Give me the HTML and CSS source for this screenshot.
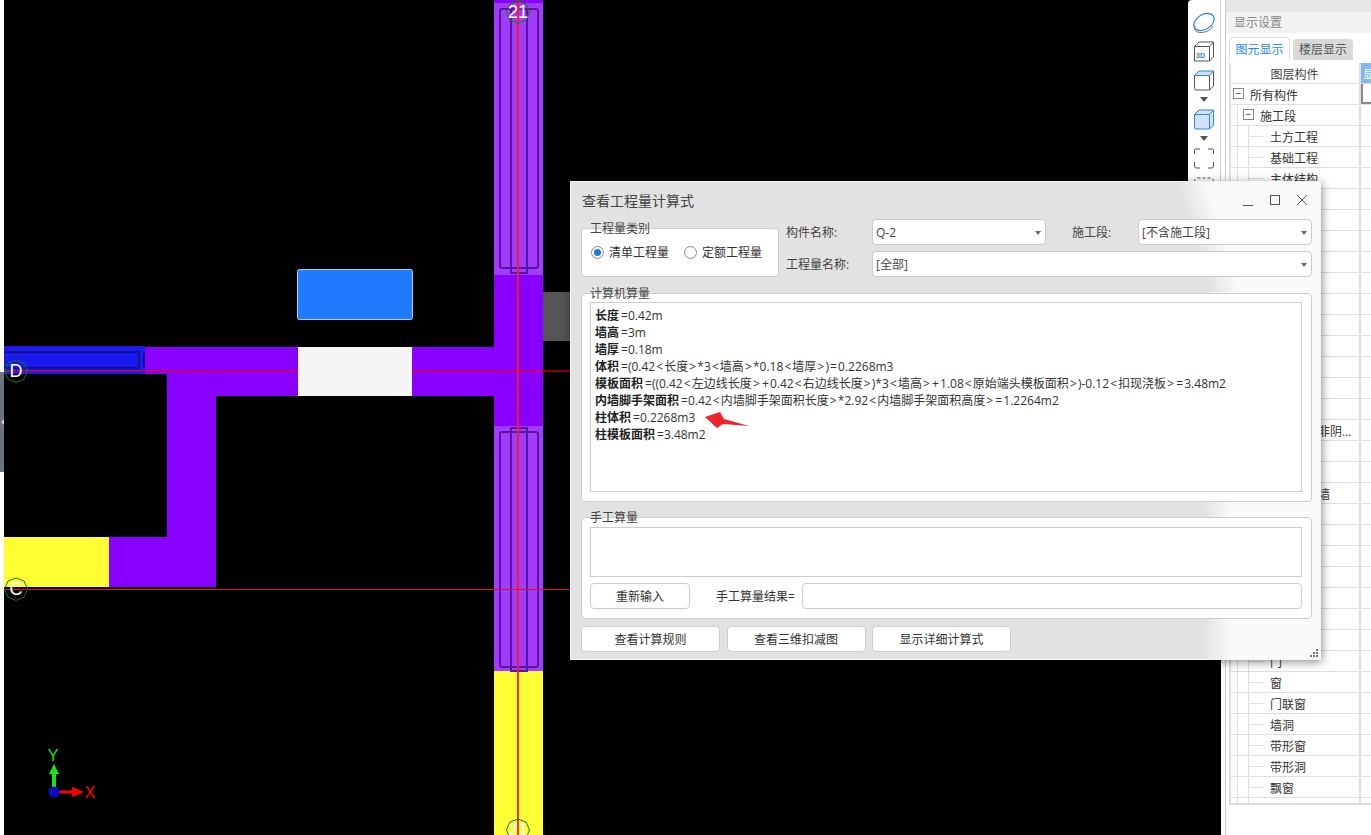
FILE: index.html
```html
<!DOCTYPE html>
<html lang="zh-CN">
<head>
<meta charset="utf-8">
<title>查看工程量计算式</title>
<link rel="stylesheet" href="styles.css">
</head>
<body>
<div class="app">
  <div class="strip"><div class="strip-handle"><span class="strip-arrow"></span></div></div>
  <main class="canvas">
    <svg class="cad" viewBox="4 0 1217 835" width="1217" height="835">
      <rect x="543" y="292" width="27" height="49" fill="#555"/>
      <!-- vertical wall -->
      <rect x="494" y="0" width="49" height="671" fill="#8800ff"/>
      <rect x="494" y="3" width="49" height="272" fill="#a33bff"/>
      <rect x="494" y="426" width="49" height="245" fill="#a33bff"/>
      <rect x="494" y="671" width="49" height="164" fill="#ffff33"/>
      <!-- horizontal walls -->
      <rect x="145" y="347" width="349" height="27" fill="#8800ff"/>
      <rect x="167" y="374" width="327" height="22" fill="#8800ff"/>
      <rect x="167" y="396" width="49" height="191" fill="#8800ff"/>
      <rect x="109" y="537" width="58" height="50" fill="#8800ff"/>
      <rect x="4" y="537" width="105" height="50" fill="#ffff33"/>
      <rect x="297.500" y="269.500" width="115" height="50" rx="2" fill="#1f7aff" stroke="#a9cdfb"/>
      <!-- blue beam -->
      <rect x="4" y="346" width="141" height="28" fill="#1a1aee"/>
      <path d="M4 352H139V368H4M139 352V368M144 352V368" fill="none" stroke="#12128c" stroke-width="2"/>
      <!-- rebar outlines -->
      <g fill="none" stroke="#55199a" stroke-width="2">
        <rect x="500" y="9" width="38" height="259" rx="2"/>
        <path d="M511 9V273H527V9"/>
        <rect x="500" y="432" width="38" height="235" rx="2"/>
        <path d="M511 428H527V671H511Z"/>
      </g>
      <!-- axis lines -->
      <path d="M4 371H570" stroke="#ff0000" stroke-opacity=".55" stroke-width="2"/>
      <rect x="298" y="347" width="114" height="49" fill="#f5f5f5"/>
      <path d="M518 0V835" stroke="#ff1a1a" stroke-opacity=".9" stroke-width="2"/>
      <path d="M4 589.500H570" stroke="#d81818"/>
      <!-- axis bubbles -->
      <g fill="none" stroke="#0b7d0b">
        <polygon points="16,360 24,363 27.500,371 24,379 16,382.500 8,379 4.500,371 8,363"/>
        <polygon points="16,578 24,581 27.500,589 24,597 16,600.500 8,597 4.500,589 8,581"/>
        <polygon points="518,1 526,4 529.500,12 526,20 518,23.500 510,20 506.500,12 510,4"/>
        <polygon points="518,819 526,822 529.500,830 526,838 518,841.500 510,838 506.500,830 510,822"/>
      </g>
      <g class="bubble-text">
        <text x="16" y="377">D</text>
        <text x="16" y="595">C</text>
        <text x="518" y="18">21</text>
        <text x="518" y="836">21</text>
      </g>
      <!-- gizmo -->
      <path d="M54 792V772" stroke="#14e614" stroke-width="4"/>
      <polygon points="54,764 59,774 49,774" fill="#14e614"/>
      <path d="M58 792H74" stroke="#f00" stroke-width="3"/>
      <polygon points="84,792 72,787 72,797" fill="#f00"/>
      <circle cx="54" cy="792" r="5.500" fill="#0a0ac8"/>
      <text class="gizmo-y" x="53" y="761">Y</text>
      <text class="gizmo-x" x="90" y="798">X</text>
    </svg>

    <div class="toolbar">
      <svg class="tool tool-first" width="24" height="24" viewBox="0 0 24 24" fill="none">
        <path d="M3 15C1.500 18 3 22 10 21.500C15 21 19 19 21 15" stroke="#777"/>
        <ellipse cx="12" cy="11" rx="11" ry="7.500" transform="rotate(-32 12 11)" stroke="#2f86e6" stroke-width="1.200"/>
      </svg>
      <svg class="tool" width="24" height="24" viewBox="0 0 24 24" fill="none" stroke="#555">
        <path d="M2.500 7.500L7 3H21.500V18L17.500 22H2.500ZM2.500 7.500H17.500V22M17.500 7.500L21.500 3"/>
        <text class="tool-3d" x="4" y="18.500">3D</text>
      </svg>
      <svg class="tool" width="24" height="24" viewBox="0 0 24 24" fill="none" stroke="#555">
        <path d="M2.500 7.500L7 3H21.500L17.500 7.500H2.500Z" fill="#cfe3fb" stroke="#2f86e6"/>
        <path d="M2.500 7.500V20.500Q2.500 22 4 22H17.500V7.500M17.500 22L21.500 18V3"/>
      </svg>
      <span class="tool-arrow"></span>
      <svg class="tool" width="24" height="24" viewBox="0 0 24 24" fill="#cfe3fb" stroke="#2f86e6">
        <path d="M2.500 7.500L7 3H21.500V18L17.500 22H4Q2.500 22 2.500 20.500ZM2.500 7.500H17.500V22M17.500 7.500L21.500 3"/>
      </svg>
      <span class="tool-arrow"></span>
      <svg class="tool" width="24" height="24" viewBox="0 0 24 24" fill="none" stroke="#555">
        <path d="M2.500 8V4Q2.500 3 4 3H8M16 3H20Q21.500 3 21.500 4V8M21.500 16V20Q21.500 22 20 22H16M8 22H4Q2.500 22 2.500 20V16"/>
      </svg>
      <svg class="tool" width="24" height="24" viewBox="0 0 24 24" fill="none" stroke="#555">
        <rect x="2.500" y="3" width="19" height="19" rx="3" stroke-dasharray="3 2"/>
      </svg>
    </div>
  </main>

  <aside class="panel">
    <div class="panel-top"></div>
    <div class="panel-head">显示设置</div>
    <div class="tabs">
      <span class="tab tab-active">图元显示</span>
      <span class="tab">楼层显示</span>
    </div>
    <div class="tree">
      <div class="row row-head"><span class="cell-main cell-center">图层构件</span><span class="cell-side side-head">显</span></div>
      <div class="row"><span class="cell-main"><i class="box box-a">−</i><span class="lv0">所有构件</span></span><span class="cell-side side-sel"></span></div>
      <div class="row"><span class="cell-main line1"><i class="box box-b">−</i><span class="lv1">施工段</span></span><span class="cell-side"></span></div>
      <div class="row"><span class="cell-main lines"><span class="lv2">土方工程</span></span><span class="cell-side"></span></div>
      <div class="row"><span class="cell-main lines"><span class="lv2">基础工程</span></span><span class="cell-side"></span></div>
      <div class="row"><span class="cell-main lines"><span class="lv2">主体结构</span></span><span class="cell-side"></span></div>
      <div class="row"><span class="cell-main lines"><span class="lv2">柱</span></span><span class="cell-side"></span></div>
      <div class="row"><span class="cell-main lines"><span class="lv2">构造柱</span></span><span class="cell-side"></span></div>
      <div class="row"><span class="cell-main lines"><span class="lv2">墙</span></span><span class="cell-side"></span></div>
      <div class="row"><span class="cell-main lines"><span class="lv2">剪力墙</span></span><span class="cell-side"></span></div>
      <div class="row"><span class="cell-main lines"><span class="lv2">砌体墙</span></span><span class="cell-side"></span></div>
      <div class="row"><span class="cell-main lines"><span class="lv2">暗柱</span></span><span class="cell-side"></span></div>
      <div class="row"><span class="cell-main lines"><span class="lv2">端柱</span></span><span class="cell-side"></span></div>
      <div class="row"><span class="cell-main lines"><span class="lv2">暗梁</span></span><span class="cell-side"></span></div>
      <div class="row"><span class="cell-main lines"><span class="lv2">连梁</span></span><span class="cell-side"></span></div>
      <div class="row"><span class="cell-main lines"><span class="lv2">框架梁</span></span><span class="cell-side"></span></div>
      <div class="row"><span class="cell-main lines"><span class="lv2">圈梁</span></span><span class="cell-side"></span></div>
      <div class="row"><span class="cell-main lines"><span class="lv2 clip">约束边缘非阴影区</span></span><span class="cell-side"></span></div>
      <div class="row"><span class="cell-main lines"><span class="lv2">现浇板</span></span><span class="cell-side"></span></div>
      <div class="row"><span class="cell-main lines"><span class="lv2">楼梯</span></span><span class="cell-side"></span></div>
      <div class="row"><span class="cell-main lines"><span class="lv2">地下连续墙</span></span><span class="cell-side"></span></div>
      <div class="row"><span class="cell-main lines"><span class="lv2">过梁</span></span><span class="cell-side"></span></div>
      <div class="row"><span class="cell-main lines"><span class="lv2">飘窗板</span></span><span class="cell-side"></span></div>
      <div class="row"><span class="cell-main lines"><span class="lv2">挑檐</span></span><span class="cell-side"></span></div>
      <div class="row"><span class="cell-main lines"><span class="lv2">栏板</span></span><span class="cell-side"></span></div>
      <div class="row"><span class="cell-main lines"><span class="lv2">阳台</span></span><span class="cell-side"></span></div>
      <div class="row"><span class="cell-main lines"><span class="lv2">雨篷</span></span><span class="cell-side"></span></div>
      <div class="row"><span class="cell-main lines"><span class="lv2">压顶</span></span><span class="cell-side"></span></div>
      <div class="row"><span class="cell-main lines"><span class="lv2">门</span></span><span class="cell-side"></span></div>
      <div class="row"><span class="cell-main lines"><span class="lv2">窗</span></span><span class="cell-side"></span></div>
      <div class="row"><span class="cell-main lines"><span class="lv2">门联窗</span></span><span class="cell-side"></span></div>
      <div class="row"><span class="cell-main lines"><span class="lv2">墙洞</span></span><span class="cell-side"></span></div>
      <div class="row"><span class="cell-main lines"><span class="lv2">带形窗</span></span><span class="cell-side"></span></div>
      <div class="row"><span class="cell-main lines"><span class="lv2">带形洞</span></span><span class="cell-side"></span></div>
      <div class="row"><span class="cell-main lines"><span class="lv2">飘窗</span></span><span class="cell-side"></span></div>
      <div class="row row-end"><span class="cell-main lines"></span><span class="cell-side"></span></div>
    </div>
  </aside>
</div>

<section class="dialog">
  <header class="titlebar">
    <span>查看工程量计算式</span>
    <div class="winbtns">
      <svg width="12" height="12" viewBox="0 0 12 12"><path d="M1 11.500H11" stroke="#555"/></svg>
      <svg width="12" height="12" viewBox="0 0 12 12"><rect x="1.500" y="1.500" width="9" height="9" fill="none" stroke="#555"/></svg>
      <svg width="12" height="12" viewBox="0 0 12 12"><path d="M1 1L11 11M11 1L1 11" stroke="#555"/></svg>
    </div>
  </header>
  <div class="dialog-body">
    <div class="top-row">
      <div class="group group-type">
        <span class="legend">工程量类别</span>
        <label class="radio"><i class="dot dot-on"></i>清单工程量</label>
        <label class="radio"><i class="dot"></i>定额工程量</label>
      </div>
      <div class="fields">
        <span class="flabel">构件名称:</span>
        <div class="combo">Q-2</div>
        <span class="flabel flabel-in">施工段:</span>
        <div class="combo">[不含施工段]</div>
        <span class="flabel">工程量名称:</span>
        <div class="combo combo-wide">[全部]</div>
      </div>
    </div>

    <div class="group group-calc">
      <span class="legend">计算机算量</span>
      <div class="textbox formula">
        <p><b>长度</b>=0.42m</p>
        <p><b>墙高</b>=3m</p>
        <p><b>墙厚</b>=0.18m</p>
        <p><b>体积</b>=(0.42<u>&lt;</u>长度<u>&gt;</u>*3<u>&lt;</u>墙高<u>&gt;</u>*0.18<u>&lt;</u>墙厚<u>&gt;</u>)<u>=</u>0.2268m3</p>
        <p><b>模板面积</b>=((0.42<u>&lt;</u>左边线长度<u>&gt;</u><u>+</u>0.42<u>&lt;</u>右边线长度<u>&gt;</u>)*3<u>&lt;</u>墙高<u>&gt;</u><u>+</u>1.08<u>&lt;</u>原始端头模板面积<u>&gt;</u>)-0.12<u>&lt;</u>扣现浇板<u>&gt;</u><u>=</u>3.48m2</p>
        <p><b>内墙脚手架面积</b>=0.42<u>&lt;</u>内墙脚手架面积长度<u>&gt;</u>*2.92<u>&lt;</u>内墙脚手架面积高度<u>&gt;</u><u>=</u>1.2264m2</p>
        <p><b>柱体积</b>=0.2268m3</p>
        <p><b>柱模板面积</b>=3.48m2</p>
      </div>
    </div>

    <div class="group group-manual">
      <span class="legend">手工算量</span>
      <div class="textbox manual-box"></div>
      <div class="manual-row">
        <span class="btn btn-input">重新输入</span>
        <span class="manual-label">手工算量结果=</span>
        <div class="result"></div>
      </div>
    </div>

    <div class="actions">
      <span class="btn btn-act">查看计算规则</span>
      <span class="btn btn-act">查看三维扣减图</span>
      <span class="btn btn-act">显示详细计算式</span>
    </div>
  </div>
  <svg class="grip" width="9" height="9" viewBox="0 0 9 9" fill="#777">
    <rect x="6" y="0" width="2" height="2"/><rect x="3" y="3" width="2" height="2"/><rect x="6" y="3" width="2" height="2"/>
    <rect x="0" y="6" width="2" height="2"/><rect x="3" y="6" width="2" height="2"/><rect x="6" y="6" width="2" height="2"/>
  </svg>
</section>

<svg class="callout" width="46" height="18" viewBox="0 0 46 18">
  <polygon points="1,5 16,0 20,7 45,14 19,12 13,16" fill="#f0242c"/>
</svg>
</body>
</html>
```

FILE: styles.css
```css
* { box-sizing: border-box; }
html, body { margin: 0; height: 100%; }
body {
  width: 1371px;
  height: 835px;
  overflow: hidden;
  background: #fff;
  color: #333;
  font: 12px/16px "Open Sans", "Noto Sans CJK SC", sans-serif;
  position: relative;
}
.app { display: flex; width: 1371px; height: 835px; }

/* left strip */
.strip { width: 4px; flex: none; padding-top: 372px; }
.strip-handle {
  height: 100px;
  background: #6c757d;
  display: flex;
  align-items: center;
}
.strip-arrow {
  width: 0; height: 0;
  border: 3px solid transparent;
  border-left-width: 0;
  border-right-color: #ccc;
  margin-left: 1px;
}

/* canvas */
.canvas { position: relative; width: 1217px; flex: none; background: #000; overflow: hidden; }
.cad { display: block; }
.bubble-text text { fill: #fff; font: 18px "Liberation Sans", sans-serif; text-anchor: middle; }
.gizmo-y { fill: #14e614; font: 16px "Liberation Sans", sans-serif; text-anchor: middle; }
.gizmo-x { fill: #f00; font: 16px "Liberation Sans", sans-serif; text-anchor: middle; }
.toolbar {
  position: absolute;
  left: 1184px;
  top: 0;
  width: 33px;
  height: 600px;
  background: #fff;
  border-right: 1px solid #ccc;
  border-top-left-radius: 4px;
  padding-top: 11px;
  display: flex;
  flex-direction: column;
  align-items: center;
}
.tool { flex: none; margin-bottom: 5px; margin-right: 1px; }
.tool-first { margin-bottom: 4px; }
.tool-3d { font: bold 7px "Liberation Sans", sans-serif; fill: #2f7fd6; stroke: none; }
.tool-arrow {
  width: 0; height: 0;
  flex: none;
  margin: 0 0 5px;
  border: 4px solid transparent;
  border-top: 5px solid #555;
  border-bottom: 0;
}

/* right panel */
.panel { flex: 1; position: relative; background: #fff; padding-left: 4px; }
.panel::before {
  content: "";
  position: absolute;
  left: 4px; top: 0; bottom: 0;
  width: 1px;
  background: #ccc;
}
.panel-top { height: 12px; background: #e6e6e6; margin-left: 1px; }
.panel-head {
  height: 21px;
  background: #f2f2f2;
  margin-left: 1px;
  padding: 3px 0 0 8px;
  color: #888;
  line-height: 16px;
}
.tabs { display: flex; gap: 3px; padding: 4px 0 3px 4px; align-items: flex-end; height: 30px; }
.tab {
  width: 60px;
  height: 21px;
  background: #d9d9d9;
  color: #555;
  text-align: center;
  line-height: 22px;
  border-radius: 4px 4px 0 0;
}
.tab-active {
  width: 61px;
  height: 23px;
  line-height: 23px;
  background: #fff;
  color: #1e88f0;
  border: 1px solid #ddd;
  border-bottom: 0;
}
.tree {
  margin-left: 4px;
  border-left: 2px solid #ddd;
  border-bottom: 2px solid #ddd;
  width: 142px;
  overflow: hidden;
}
.row { display: flex; height: 21px; border-bottom: 1px solid #ddd; }
.row-end { height: 5px; border-bottom: 0; }
.row-head .cell-main { color: #444; }
.cell-main {
  position: relative;
  width: 130px;
  flex: none;
  border-right: 2px solid #ddd;
  line-height: 23px;
  white-space: nowrap;
  color: #333;
}
.cell-center { text-align: center; padding-right: 1px; }
.cell-side { flex: 1; }
.side-head { background: #7fb8f5; color: #fff; padding-left: 2px; line-height: 23px; }
.side-sel { border: 2px solid #888; border-right: 0; border-top: 0; }
.lv0 { position: absolute; left: 19px; }
.lv1 { position: absolute; left: 29px; }
.lv2 { position: absolute; left: 39px; }
.clip { width: 82px; overflow: hidden; text-overflow: ellipsis; }
.box {
  position: absolute;
  width: 11px; height: 11px;
  top: 4px;
  border: 1px solid #888;
  background: #fff;
  font: 10px/9px "Liberation Sans", sans-serif;
  text-align: center;
  color: #444;
  z-index: 1;
}
.box-a { left: 2px; }
.box-b { left: 12px; }
.line1::before {
  content: "";
  position: absolute;
  left: 6px; top: -1px; bottom: -1px;
  width: 1px;
  background: #ddd;
}
.lines::before {
  content: "";
  position: absolute;
  left: 6px; top: -1px; bottom: -1px;
  width: 10px;
  border-left: 1px solid #ddd;
  border-right: 1px solid #ddd;
}
.lines::after {
  content: "";
  position: absolute;
  left: 17px; top: 10px;
  width: 16px;
  height: 1px;
  background: #ddd;
}

/* dialog */
.dialog {
  position: absolute;
  left: 570px;
  top: 181px;
  width: 751px;
  height: 479px;
  border: 1px solid #f4f4f4;
  background:
    linear-gradient(73deg, #e2e2e2 0, #e2e2e2 612px, #fafafa 640px) left top / 100% 110px no-repeat,
    linear-gradient(90deg, #e2e2e2 0, #e2e2e2 632px, #fafafa 660px) left bottom / 100% 370px no-repeat;
  box-shadow: 1px 2px 9px rgba(0, 0, 0, .45);
  color: #444;
}
.titlebar {
  height: 37px;
  display: flex;
  align-items: center;
  justify-content: space-between;
  padding: 0 12px 0 11px;
  font-size: 14px;
  color: #444;
}
.winbtns { display: flex; gap: 15px; margin-top: -1px; }
.dialog-body { padding: 0 8px 0 10px; }
.top-row { display: flex; gap: 7px; }
.group {
  position: relative;
  background: #fff;
  border: 1px solid #ccc;
  border-radius: 4px;
}
.legend { position: absolute; left: 8px; top: -8px; line-height: 16px; color: #444; }
.group-type {
  width: 198px;
  height: 49px;
  margin-top: 9px;
  display: flex;
  align-items: center;
  gap: 15px;
  padding: 0 0 0 9px;
}
.radio { display: flex; align-items: center; gap: 5px; color: #333; }
.dot {
  width: 13px; height: 13px;
  border: 1px solid #888;
  border-radius: 50%;
  background: #fff;
  display: flex;
  align-items: center;
  justify-content: center;
}
.dot-on::after {
  content: "";
  width: 7px; height: 7px;
  border-radius: 50%;
  background: #1e78e6;
}
.fields {
  display: grid;
  grid-template-columns: 86px 174px 92px 174px;
  grid-auto-rows: 26px;
  row-gap: 6px;
  align-items: center;
}
.flabel { color: #444; margin-top: 1px; }
.flabel-in { padding-left: 26px; }
.combo {
  position: relative;
  height: 26px;
  background: #fff;
  border: 1px solid #ccc;
  border-radius: 4px;
  padding-left: 3px;
  line-height: 26px;
  color: #444;
}
.combo::after {
  content: "";
  position: absolute;
  right: 4px; top: 11px;
  border: 3px solid transparent;
  border-top: 4px solid #666;
  border-bottom: 0;
}
.combo-wide { grid-column: span 3; }
.group-calc { height: 209px; margin-top: 16px; padding: 8px 9px 0 8px; }
.textbox { background: #fff; border: 1px solid #ccc; }
.formula { height: 190px; padding: 4px 4px 0; color: #333; }
.formula p { margin: 0; height: 17px; line-height: 17px; white-space: nowrap; }
.formula b { font-weight: 700; color: #222; margin-right: 2px; }
.formula u { text-decoration: none; padding: 0 1.100px; }
.group-manual { height: 102px; margin-top: 15px; padding: 9px 9px 0 8px; }
.manual-box { height: 50px; }
.manual-row { display: flex; align-items: center; margin-top: 6px; }
.btn {
  display: block;
  height: 26px;
  background: #fff;
  border: 1px solid #ccc;
  border-radius: 4px;
  text-align: center;
  line-height: 25px;
  color: #333;
}
.btn-input { width: 100px; flex: none; }
.manual-label { margin-left: 26px; width: 86px; flex: none; color: #333; line-height: 25px; }
.result { flex: 1; height: 26px; border: 1px solid #ccc; border-radius: 4px; background: #fff; }
.actions { display: flex; gap: 6.500px; margin-top: 7px; }
.btn-act { width: 139px; }
.grip { position: absolute; right: 1px; bottom: 1px; }
.callout { position: absolute; left: 704px; top: 412px; }
```
